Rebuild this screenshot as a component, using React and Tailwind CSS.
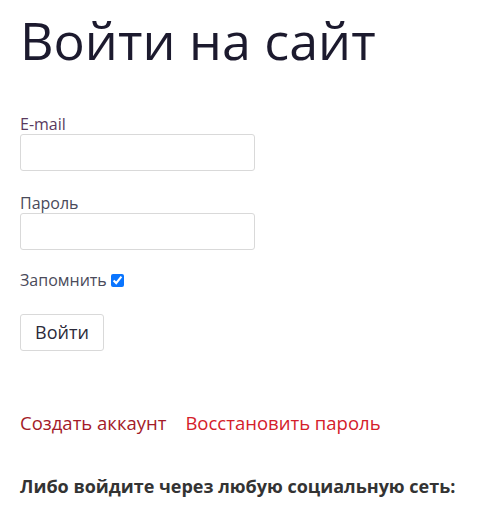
export default function App() {
  return (
    <div className="min-h-screen bg-white px-5 pt-[8px] font-['Open_Sans',sans-serif] text-[#4a4a5a]">
      <h1 className="text-[52px] leading-[64px] text-[#1c1a2e]">Войти на сайт</h1>

      <form className="mt-[43px] flex flex-col" onSubmit={(e) => e.preventDefault()}>
        <label className="text-[16px] leading-[18px] text-[#5a3a5e]">E-mail</label>
        <input type="text" className="mt-[1px] h-[37px] w-[235px] rounded-[3px] border border-[#d9d9d9] bg-white outline-none" />

        <label className="mt-[23px] text-[16px] leading-[18px]">Пароль</label>
        <input type="password" className="mt-[1px] h-[37px] w-[235px] rounded-[3px] border border-[#d9d9d9] bg-white outline-none" />

        <div className="mt-[21px] flex items-center text-[16px] leading-[18px]">
          <span>Запомнить</span>
          <input type="checkbox" defaultChecked className="ml-[4px] h-[13px] w-[13px] accent-[#0a75ff]" />
        </div>

        <div className="mt-[25px]">
          <button type="submit" className="h-[37px] w-[84px] rounded-[3px] border border-[#d9d9d9] bg-white text-[18px] text-[#2c2a3a]">
            Войти
          </button>
        </div>
      </form>

      <div className="mt-[60px] flex gap-[19px] text-[18.5px] leading-[24px]">
        <a href="#" className="text-[#a31a28]">Создать аккаунт</a>
        <a href="#" className="text-[#d4202a]">Восстановить пароль</a>
      </div>

      <p className="mt-[38px] text-[18px] font-bold text-[#333]">Либо войдите через любую социальную сеть:</p>
    </div>
  );
}
